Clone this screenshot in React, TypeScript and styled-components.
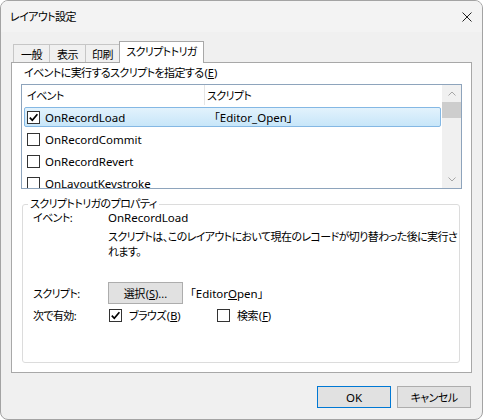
import styled, { createGlobalStyle } from "styled-components";

const GlobalStyle = createGlobalStyle`
  html, body {
    margin: 0;
    padding: 0;
    background: #ffffff;
  }
  body {
    font-family: "Noto Sans", "Noto Sans CJK JP", sans-serif;
    font-size: 11px;
    letter-spacing: -0.6px;
    color: #000;
    font-feature-settings: "palt" 1;
  }
  u {
    text-underline-offset: 1px;
  }
`;

// latin runs are set a little larger and without the tight CJK tracking
const Latin = styled.span`
  font-size: 11.5px;
  letter-spacing: 0;
`;

// access key mnemonic like (E), letter underlined
const KeyHint = styled.span`
  letter-spacing: 0;
  margin-left: 1px;
`;

const Key = ({ k }: { k: string }) => (
  <KeyHint>
    (<u>{k}</u>)
  </KeyHint>
);

const Window = styled.div`
  width: 483px;
  height: 420px;
  box-sizing: border-box;
  border: 1px solid #a3a3a3;
  border-radius: 8px;
  background: #f0f0f0;
  display: flex;
  flex-direction: column;
  overflow: hidden;
`;

const TitleBar = styled.div`
  height: 31px;
  flex: none;
  display: flex;
  align-items: center;
  justify-content: space-between;
  padding: 0 10px 0 9px;
  background: #f3f3f3;
  .title {
    line-height: 16px;
  }
`;

const Body = styled.div`
  flex: 1;
  display: flex;
  flex-direction: column;
  padding: 9px 10px 0 10px;
`;

const TabStrip = styled.div`
  display: flex;
  align-items: flex-end;
  height: 21px;
  padding-left: 2px;
`;

const Tab = styled.div<{ $active?: boolean; $width: number }>`
  box-sizing: border-box;
  width: ${(p) => p.$width}px;
  height: ${(p) => (p.$active ? "22px" : "18px")};
  margin-bottom: ${(p) => (p.$active ? "-1px" : "0")};
  margin-left: -1px;
  padding-bottom: ${(p) => (p.$active ? "3px" : "0")};
  display: flex;
  align-items: center;
  justify-content: center;
  white-space: nowrap;
  border: 1px solid ${(p) => (p.$active ? "#a8a8a8" : "#c6c6c6")};
  border-bottom: none;
  background: ${(p) => (p.$active ? "#ffffff" : "#f0f0f0")};
  position: relative;
  z-index: ${(p) => (p.$active ? 1 : 0)};
  &:first-child {
    margin-left: 0;
  }
`;

const Panel = styled.div`
  height: 311px;
  box-sizing: border-box;
  border: 1px solid #a8a8a8;
  background: #ffffff;
  padding: 2px 9px 0 9px;
  display: flex;
  flex-direction: column;
`;

const SectionLabel = styled.div`
  line-height: 16px;
  margin: 0 0 3px 3px;
`;

const List = styled.div`
  height: 105px;
  box-sizing: border-box;
  border: 1px solid #8ea4bc;
  display: flex;
  flex: none;
`;

const ListMain = styled.div`
  flex: 1;
  display: flex;
  flex-direction: column;
  overflow: hidden;
`;

const Header = styled.div`
  height: 20px;
  flex: none;
  display: flex;
  align-items: center;
`;

const HeaderCell = styled.div<{ $width?: number }>`
  box-sizing: border-box;
  width: ${(p) => (p.$width ? `${p.$width}px` : "auto")};
  flex: ${(p) => (p.$width ? "none" : "1")};
  height: 100%;
  display: flex;
  align-items: center;
  padding-left: ${(p) => (p.$width ? "5px" : "2px")};
  border-right: ${(p) => (p.$width ? "1px solid #e5e5e5" : "none")};
`;

const Row = styled.div<{ $selected?: boolean }>`
  flex: none;
  height: 20px;
  box-sizing: border-box;
  margin: 2px 1px 0 2px;
  padding-left: 2px;
  display: flex;
  align-items: center;
  border: 1px solid ${(p) => (p.$selected ? "#84b8e4" : "transparent")};
  border-radius: 2px;
  background: ${(p) =>
    p.$selected ? "linear-gradient(#e2f2fc, #c7e6f9)" : "transparent"};
`;

const EventCell = styled.div`
  width: 180px;
  flex: none;
  display: flex;
  align-items: center;
  gap: 5px;
  white-space: nowrap;
`;

const ScriptCell = styled.div`
  flex: 1;
  padding-left: 7px;
  white-space: nowrap;
`;

const Scrollbar = styled.div`
  width: 19px;
  flex: none;
  background: #f0f0f0;
  display: flex;
  flex-direction: column;
  .grow {
    flex: 1;
  }
`;

const ScrollButton = styled.div`
  height: 17px;
  display: flex;
  align-items: center;
  justify-content: center;
`;

const Thumb = styled.div`
  height: 16px;
  background: #cdcdcd;
`;

const Box = styled.span`
  width: 13px;
  height: 13px;
  box-sizing: border-box;
  border: 1px solid #333333;
  background: #ffffff;
  display: inline-flex;
  align-items: center;
  justify-content: center;
  flex: none;
`;

const Group = styled.fieldset`
  margin: 8px 2px 9px 1px;
  padding: 0 0 0 10px;
  border: 1px solid #dcdcdc;
  border-radius: 3px;
  flex: 1;
  min-width: 0;
  display: flex;
  flex-direction: column;
`;

const Legend = styled.legend`
  line-height: 14px;
  padding: 0 2px;
  margin-left: -5px;
`;

const PropRow = styled.div<{ $height?: number; $top?: number }>`
  display: flex;
  align-items: ${(p) => (p.$height ? "center" : "flex-start")};
  height: ${(p) => (p.$height ? `${p.$height}px` : "auto")};
  margin-top: ${(p) => p.$top ?? 0}px;
  line-height: 15px;
`;

const PropLabel = styled.div`
  width: 75px;
  flex: none;
`;

const PropValue = styled.div`
  flex: 1;
  display: flex;
  flex-direction: column;
  align-items: flex-start;
  .desc {
    margin-top: 4px;
    white-space: nowrap;
  }
`;

const SelectButton = styled.button`
  width: 75px;
  height: 22px;
  box-sizing: border-box;
  border: 1px solid #adadad;
  background: #e1e1e1;
  font: inherit;
  letter-spacing: inherit;
  color: #000;
  padding: 0;
  margin-right: 7px;
  .dots {
    letter-spacing: 0;
  }
`;

const CheckItem = styled.div<{ $width?: number }>`
  display: flex;
  align-items: center;
  gap: 7px;
  margin-left: 1px;
  width: ${(p) => (p.$width ? `${p.$width}px` : "auto")};
  flex: none;
`;

const ButtonRow = styled.div`
  display: flex;
  justify-content: flex-end;
  gap: 6px;
  margin-top: 13px;
  padding-right: 1px;
`;

const DialogButton = styled.button<{ $primary?: boolean }>`
  width: 74px;
  height: 22px;
  box-sizing: border-box;
  border: 1px solid ${(p) => (p.$primary ? "#0078d4" : "#adadad")};
  background: #e1e1e1;
  font: inherit;
  letter-spacing: inherit;
  color: #000;
  padding: 0;
`;

const Check = () => (
  <svg width="11" height="11" viewBox="0 0 11 11">
    <polyline
      points="1.8,5.6 4.3,8.3 9.4,2.2"
      fill="none"
      stroke="#000"
      strokeWidth="1.7"
    />
  </svg>
);

const CheckBox = ({ checked }: { checked?: boolean }) => (
  <Box>{checked && <Check />}</Box>
);

const Chevron = ({ up }: { up?: boolean }) => (
  <svg width="8" height="5" viewBox="0 0 8 5">
    <polyline
      points={up ? "0.5,4.5 4,1 7.5,4.5" : "0.5,0.5 4,4 7.5,0.5"}
      fill="none"
      stroke="#a6a6a6"
      strokeWidth="1"
    />
  </svg>
);

const tabs = [
  { label: "一般", width: 37 },
  { label: "表示", width: 37 },
  { label: "印刷", width: 35 },
  { label: "スクリプトトリガ", width: 85, active: true },
];

const events = [
  { name: "OnRecordLoad", script: "「Editor_Open」", checked: true },
  { name: "OnRecordCommit", script: "", checked: false },
  { name: "OnRecordRevert", script: "", checked: false },
  { name: "OnLayoutKeystroke", script: "", checked: false },
];

const App = () => {
  return (
    <>
      <GlobalStyle />
      <Window>
        <TitleBar>
          <span className="title">レイアウト設定</span>
          <svg width="10" height="10" viewBox="0 0 10 10">
            <path d="M0.5 0.5 L9.5 9.5 M9.5 0.5 L0.5 9.5" stroke="#222" strokeWidth="1" />
          </svg>
        </TitleBar>
        <Body>
          <TabStrip>
            {tabs.map((t) => (
              <Tab key={t.label} $width={t.width} $active={t.active}>
                {t.label}
              </Tab>
            ))}
          </TabStrip>
          <Panel>
            <SectionLabel>
              イベントに実行するスクリプトを指定する<Key k="E" />
            </SectionLabel>
            <List>
              <ListMain>
                <Header>
                  <HeaderCell $width={183}>イベント</HeaderCell>
                  <HeaderCell>スクリプト</HeaderCell>
                </Header>
                {events.map((e, i) => (
                  <Row key={e.name} $selected={i === 0}>
                    <EventCell>
                      <CheckBox checked={e.checked} />
                      <Latin>{e.name}</Latin>
                    </EventCell>
                    <ScriptCell>
                      <Latin>{e.script}</Latin>
                    </ScriptCell>
                  </Row>
                ))}
              </ListMain>
              <Scrollbar>
                <ScrollButton>
                  <Chevron up />
                </ScrollButton>
                <Thumb />
                <div className="grow" />
                <ScrollButton>
                  <Chevron />
                </ScrollButton>
              </Scrollbar>
            </List>
            <Group>
              <Legend>スクリプトトリガのプロパティ</Legend>
              <PropRow $top={-1}>
                <PropLabel>イベント:</PropLabel>
                <PropValue>
                  <Latin>OnRecordLoad</Latin>
                  <span className="desc">
                    スクリプトは、このレイアウトにおいて現在のレコードが切り替わった後に実行さ
                    <br />
                    れます。
                  </span>
                </PropValue>
              </PropRow>
              <PropRow $height={22} $top={23}>
                <PropLabel>スクリプト:</PropLabel>
                <SelectButton>
                  選択<Key k="S" />
                  <span className="dots">...</span>
                </SelectButton>
                <Latin>
                  「Editor<u>O</u>pen」
                </Latin>
              </PropRow>
              <PropRow $height={22}>
                <PropLabel>次で有効:</PropLabel>
                <CheckItem $width={107}>
                  <CheckBox checked />
                  <span>
                    ブラウズ<Key k="B" />
                  </span>
                </CheckItem>
                <CheckItem>
                  <CheckBox />
                  <span>
                    検索<Key k="F" />
                  </span>
                </CheckItem>
              </PropRow>
            </Group>
          </Panel>
          <ButtonRow>
            <DialogButton $primary>
              <Latin>OK</Latin>
            </DialogButton>
            <DialogButton>キャンセル</DialogButton>
          </ButtonRow>
        </Body>
      </Window>
    </>
  );
};

export default App;
